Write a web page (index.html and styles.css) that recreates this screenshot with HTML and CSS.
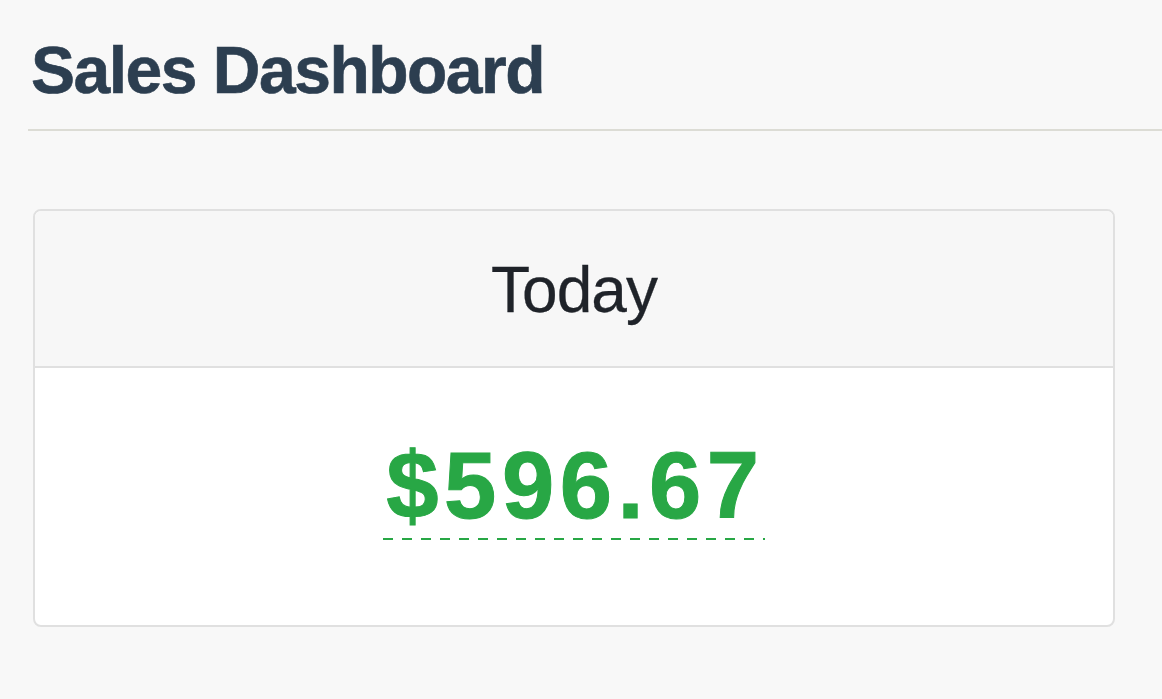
FILE: index.html
```html
<!DOCTYPE html>
<html lang="en">
<head>
<meta charset="UTF-8" />
<meta name="viewport" content="width=device-width, initial-scale=1" />
<title>Sales Dashboard</title>
<link rel="stylesheet" href="styles.css">
</head>
<body>
<div class="page">
  <header class="page-header">
    <h1>Sales Dashboard</h1>
  </header>
  <div class="card">
    <div class="card-header">Today</div>
    <div class="card-body">
      <span class="amount" title="Total sales today">$596.67</span>
    </div>
  </div>
</div>
</body>
</html>
```

FILE: styles.css
```css
/* Reset and base */
* {
  box-sizing: border-box;
}
body {
  margin: 0;
  font-family: 'Liberation Sans', Arial, Helvetica, sans-serif;
  background-color: #f8f8f8;
  color: #212529;
}
.page {
  padding-left: 28px;
}
.page-header {
  padding: 37px 0 26px 0;
  border-bottom: 2px solid #dcdcd5;
}
.page-header h1 {
  margin: 0 0 0 3px;
  font-size: 66px;
  line-height: 1;
  font-weight: 700;
  color: #2c3e50;
  letter-spacing: -1.5px;
  -webkit-text-stroke: 0.6px #2c3e50;
}
.card {
  margin: 78px 47px 0 5px;
  border: 2px solid #e0e0e0;
  border-radius: 8px;
  background-color: #fff;
  overflow: hidden;
}
.card-header {
  background-color: #f7f7f7;
  border-bottom: 2px solid #e0e0e0;
  padding: 47px 0 44px 0;
  font-size: 64px;
  line-height: 1;
  text-align: center;
  color: #1f2329;
  letter-spacing: -1px;
  -webkit-text-stroke: 0.3px #1f2329;
}
.card-body {
  display: flex;
  justify-content: center;
  padding: 71px 0 85px 0;
}
.amount {
  display: inline-block;
  font-size: 94px;
  font-weight: 700;
  line-height: 1;
  letter-spacing: 5.5px;
  color: #28a745;
  -webkit-text-stroke: 1px #28a745;
  padding: 0 0 7px 3px;
  background-image: repeating-linear-gradient(90deg, #28a745 0 10px, transparent 10px 19px);
  background-size: 100% 2px;
  background-position: left bottom;
  background-repeat: no-repeat;
  cursor: help;
}
```
